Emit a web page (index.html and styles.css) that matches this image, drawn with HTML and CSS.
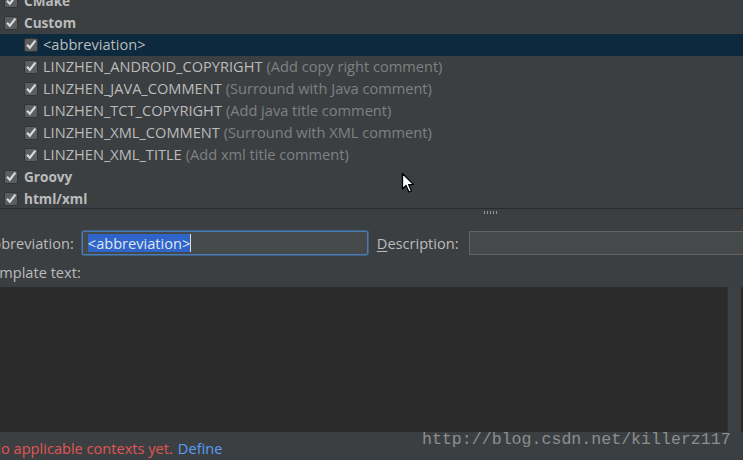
FILE: index.html
```html
<!DOCTYPE html>
<html>
<head>
<meta charset="utf-8">
<link rel="stylesheet" href="styles.css">
</head>
<body>
<div class="app">
  <div class="tree">
    <div class="row group"><span class="cb"></span><span class="name">CMake</span></div>
    <div class="row group"><span class="cb"></span><span class="name">Custom</span></div>
    <div class="row item selected"><span class="cb"></span><span class="name">&lt;abbreviation&gt;</span></div>
    <div class="row item"><span class="cb"></span><span class="name">LINZHEN_ANDROID_COPYRIGHT</span><span class="desc">(Add copy right comment)</span></div>
    <div class="row item"><span class="cb"></span><span class="name">LINZHEN_JAVA_COMMENT</span><span class="desc">(Surround with Java comment)</span></div>
    <div class="row item"><span class="cb"></span><span class="name">LINZHEN_TCT_COPYRIGHT</span><span class="desc">(Add java title comment)</span></div>
    <div class="row item"><span class="cb"></span><span class="name">LINZHEN_XML_COMMENT</span><span class="desc">(Surround with XML comment)</span></div>
    <div class="row item"><span class="cb"></span><span class="name">LINZHEN_XML_TITLE</span><span class="desc">(Add xml title comment)</span></div>
    <div class="row group"><span class="cb"></span><span class="name">Groovy</span></div>
    <div class="row group"><span class="cb"></span><span class="name">html/xml</span></div>
  </div>
  <div class="splitter"><span class="grip"></span></div>
  <div class="form">
    <div class="fields">
      <label class="lbl">Abbreviation:</label>
      <div class="input focus"><span class="sel">&lt;abbreviation&gt;</span><span class="caret"></span></div>
      <label class="lbl desc-lbl"><u>D</u>escription:</label>
      <div class="input wide"></div>
    </div>
    <div class="tt">Template text:</div>
  </div>
  <div class="editor">
    <div class="code"></div>
    <div class="vscroll"></div>
  </div>
  <div class="status">
    <span class="err">No applicable contexts yet.</span><span class="link">Define</span>
    <span class="wm">http://blog.csdn.net/killerz117</span>
  </div>
  <svg class="cursor" width="14" height="22" viewBox="0 0 14 22"><path d="M1.5 1.5 L1.5 17 L5 13.5 L8 20 L10.5 19 L7.6 12.6 L12.5 12.6 Z" fill="#fff" stroke="#000" stroke-width="1.3" stroke-linejoin="round"/></svg>
</div>
</body>
</html>
```
FILE: styles.css
```css
html, body { margin: 0; padding: 0; }
body {
  background: #3c3f41;
  font-family: "Open Sans", "DejaVu Sans", sans-serif;
  font-size: 14.6px;
  color: #bbbbbb;
  width: 743px;
  height: 460px;
  overflow: hidden;
}
.app { position: relative; width: 743px; height: 460px; display: flex; flex-direction: column; overflow: hidden; }
.tree { height: 208px; flex: 0 0 208px; overflow: hidden; display: flex; flex-direction: column; }
.tree .row:first-child { margin-top: -10px; }
.row { height: 22px; flex: 0 0 22px; display: flex; align-items: center; white-space: nowrap; }
.row .name, .row .desc { position: relative; top: -1px; }
.row.group { padding-left: 4px; font-weight: bold; font-size: 13.6px; }
.row.item { padding-left: 24px; }
.row.selected { background: #0d293e; }
.cb {
  width: 14px; height: 14px; margin-right: 5px; flex: 0 0 14px;
  box-sizing: border-box;
  border: 1px solid #323436;
  border-radius: 2px;
  background: #5b5e61 url("data:image/svg+xml;utf8,<svg xmlns='http://www.w3.org/2000/svg' width='12' height='12' viewBox='0 0 12 12'><path d='M2 5.8 L4.8 8.8 L10.4 1.6' fill='none' stroke='%23d8d8d8' stroke-width='2.2'/></svg>") no-repeat center;
}
.row.group .cb { margin-right: 6px; }
.name { color: #bbbbbb; }
.desc { color: #7f8183; margin-left: 4px; }
.splitter { height: 22px; flex: 0 0 22px; border-top: 1px solid #2b2b2b; display: flex; justify-content: center; }
.grip {
  margin-top: 2px; margin-left: 236px; width: 14px; height: 3px;
  background-image: radial-gradient(circle, #9a9a9a 0.7px, transparent 0.8px);
  background-size: 3px 2px;
}
.form { margin-left: -17px; }
.fields { display: flex; align-items: center; height: 24px; }
.lbl { white-space: nowrap; }
.input {
  box-sizing: border-box; height: 24px; background: #45494a;
  border: 1px solid #646464; display: flex; align-items: center;
}
.input.focus {
  margin-left: 8px; width: 286px; flex: 0 0 286px; border: 1px solid #4a7cb3; border-radius: 2px;
  box-shadow: 0 0 0 1px #3d6185; padding-left: 5px;
}
.sel { background: #2f65ca; color: #dfe6f0; line-height: 18px; }
.caret { width: 1px; height: 18px; background: #dddddd; }
.desc-lbl { margin-left: 9px; }
.desc-lbl u { text-decoration-thickness: 1px; text-underline-offset: 2px; }
.input.wide { margin-left: 10px; width: 300px; flex: 0 0 300px; }
.tt { margin-top: 6px; height: 22px; line-height: 22px; }
.editor { height: 145px; flex: 0 0 145px; margin-top: 4px; display: flex; background: #2b2b2b; }
.code { flex: 1; }
.vscroll { width: 13px; background: #3d4042; border-left: 1px solid #2f3133; margin-right: 2px; }
.status { flex: 1; display: flex; align-items: center; position: relative; margin-left: -10px; padding-top: 4px; }
.err { color: #e05555; }
.link { color: #589df6; margin-left: 5px; }
.wm {
  position: absolute; left: 432px; top: -2px;
  font-family: "Liberation Mono", monospace; font-size: 16.6px; color: #8d8e8f;
}
.cursor { position: absolute; left: 401px; top: 172px; }
```
